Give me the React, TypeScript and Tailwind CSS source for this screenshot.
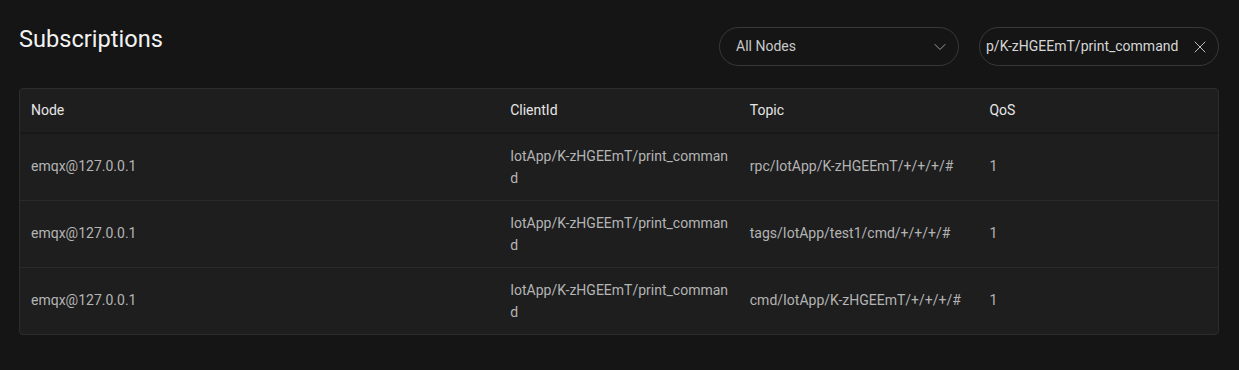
import { ChevronDown, X } from 'lucide-react'

interface Subscription {
  clientId: string
  node: string
  qos: number
  topic: string
}

const subscriptions: Subscription[] = [
  {
    node: 'emqx@127.0.0.1',
    clientId: 'IotApp/K-zHGEEmT/print_command',
    topic: 'rpc/IotApp/K-zHGEEmT/+/+/+/#',
    qos: 1,
  },
  {
    node: 'emqx@127.0.0.1',
    clientId: 'IotApp/K-zHGEEmT/print_command',
    topic: 'tags/IotApp/test1/cmd/+/+/+/#',
    qos: 1,
  },
  {
    node: 'emqx@127.0.0.1',
    clientId: 'IotApp/K-zHGEEmT/print_command',
    topic: 'cmd/IotApp/K-zHGEEmT/+/+/+/#',
    qos: 1,
  },
]

export default function App() {
  return (
    <div
      className="min-h-[370px] bg-[#151515] pl-[19px] pr-[20px] pt-[27px]"
      style={{ fontFamily: 'Roboto, "Noto Sans", sans-serif' }}
    >
      <div className="flex items-center justify-between">
        <h1 className="-mt-[14px] text-[23.6px] font-normal text-[#f2f2f2]">
          Subscriptions
        </h1>
        <div className="flex gap-[20px]">
          <button
            className="flex h-[39px] w-[240px] items-center justify-between rounded-full border border-[#383838] pl-[16px] pr-[8px] text-[14px] text-[#c8c8c8]"
            type="button"
          >
            All Nodes
            <ChevronDown className="text-[#9a9a9a]" size={20} strokeWidth={1.2} />
          </button>
          <div className="flex h-[39px] w-[240px] items-center justify-between rounded-full border border-[#383838] pl-[6px] pr-[8px] text-[14px] text-[#d6d6d6]">
            <span className="truncate">p/K-zHGEEmT/print_command</span>
            <X className="shrink-0 text-[#bdbdbd]" size={20} strokeWidth={1.2} />
          </div>
        </div>
      </div>

      <div className="mt-[22px] overflow-hidden rounded-[4px] border border-[#2c2c2c] bg-[#1e1e1f]">
        <table className="w-full table-fixed text-left text-[14px]">
          <colgroup>
            <col className="w-[40%]" />
            <col className="w-[20%]" />
            <col className="w-[20%]" />
            <col className="w-[20%]" />
          </colgroup>
          <thead className="border-b-2 border-[#181818] text-[#e6e6e6]">
            <tr>
              {['Node', 'ClientId', 'Topic', 'QoS'].map((column) => (
                <th className="h-[44px] px-[11px] font-normal" key={column}>
                  {column}
                </th>
              ))}
            </tr>
          </thead>
          <tbody className="divide-y divide-[#2a2a2a] text-[#b4b4b4]">
            {subscriptions.map((sub) => (
              <tr className="h-[67px]" key={sub.topic}>
                <td className="px-[11px]">{sub.node}</td>
                <td className="break-all pl-[11px] pr-[4px] leading-[22px]">
                  {sub.clientId}
                </td>
                <td className="px-[11px]">{sub.topic}</td>
                <td className="px-[11px]">{sub.qos}</td>
              </tr>
            ))}
          </tbody>
        </table>
      </div>
    </div>
  )
}
